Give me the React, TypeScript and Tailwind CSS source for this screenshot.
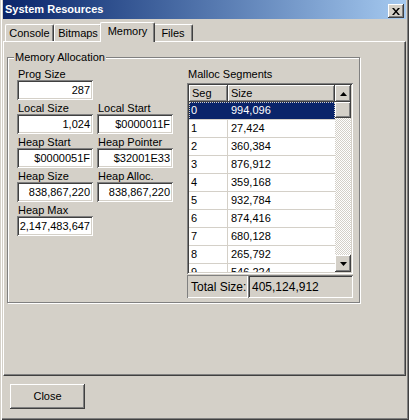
import React from 'react';

const raised =
  'shadow-[inset_-1px_-1px_0_#404040,inset_1px_1px_0_#ffffff,inset_-2px_-2px_0_#808080,inset_2px_2px_0_#d4d0c8]';
const sunken =
  'shadow-[inset_1px_1px_0_#808080,inset_-1px_-1px_0_#ffffff,inset_2px_2px_0_#404040,inset_-2px_-2px_0_#d4d0c8]';

const segments = [
  '994,096',
  '27,424',
  '360,384',
  '876,912',
  '359,168',
  '932,784',
  '874,416',
  '680,128',
  '265,792',
  '546,224',
];

function Field({ label, value }: { label: string; value: string }) {
  return (
    <div className="flex flex-col">
      <div className="h-[12px] leading-[12px] pl-[1px]">{label}</div>
      <div className={`h-[20px] w-[76px] bg-white ${sunken} flex items-center justify-end pr-[3px] whitespace-nowrap overflow-hidden`}>
        {value}
      </div>
    </div>
  );
}

function Tab({ label, active, width }: { label: string; active?: boolean; width: string }) {
  if (active) {
    return (
      <div
        className={`${width} h-[20px] -mx-[2px] -mb-[1px] relative z-10 bg-[#d4d0c8] border-t border-l border-white border-r border-r-[#404040] rounded-t-[2px] shadow-[inset_-1px_0_0_#808080] flex items-center justify-center pb-[2px]`}
      >
        {label}
      </div>
    );
  }
  return (
    <div
      className={`${width} h-[17px] bg-[#d4d0c8] border-t border-l border-white border-r border-r-[#404040] rounded-t-[2px] shadow-[inset_-1px_0_0_#808080] flex items-center justify-center`}
    >
      {label}
    </div>
  );
}

function Arrow({ up }: { up?: boolean }) {
  return (
    <svg width="7" height="4" viewBox="0 0 7 4">
      {up ? <polygon points="3.5,0 7,4 0,4" fill="#000" /> : <polygon points="0,0 7,0 3.5,4" fill="#000" />}
    </svg>
  );
}

export default function App() {
  return (
    <div
      className="w-[409px] h-[420px] bg-[#d4d0c8] flex flex-col px-[3px] pb-[3px] text-[11px] text-black shadow-[inset_1px_0_0_#d4d0c8,inset_2px_0_0_#ffffff,inset_-1px_-1px_0_#404040,inset_-2px_-2px_0_#808080] overflow-hidden"
      style={{ fontFamily: '"Liberation Sans", Arial, sans-serif' }}
    >
      {/* title bar */}
      <div className="h-[19px] flex items-start justify-between bg-gradient-to-r from-[#0a246a] to-[#a6caf0]">
        <div className="text-white font-bold text-[11px] leading-[18px] pl-[2px]">System Resources</div>
        <button className={`mt-[4px] mr-[2px] w-[16px] h-[14px] bg-[#d4d0c8] ${raised} flex items-center justify-center`}>
          <svg width="8" height="7" viewBox="0 0 8 7">
            <path d="M0 0h2l2 2.5L6 0h2L5 3.5 8 7H6L4 4.5 2 7H0l3-3.5z" fill="#000" />
          </svg>
        </button>
      </div>

      {/* tabs */}
      <div className="mt-[3px] h-[19px] flex items-end pl-[2px]">
        <Tab label="Console" width="w-[49px]" />
        <Tab label="Bitmaps" width="w-[48px]" />
        <Tab label="Memory" width="w-[55px]" active />
        <Tab label="Files" width="w-[40px]" />
      </div>

      {/* tab panel */}
      <div className="h-[335px] border-t border-l border-white border-r border-b border-r-[#404040] border-b-[#404040] shadow-[inset_-1px_-1px_0_#808080] pt-[15px] pl-[3px]">
        <div className="relative w-[353px] h-[246px] border border-[#808080] shadow-[1px_1px_0_#ffffff,inset_1px_1px_0_#ffffff] flex pt-[10px] pl-[9px]">
          <div className="absolute -top-[7px] left-[6px] bg-[#d4d0c8] px-[1px] leading-[12px]">Memory Allocation</div>

          {/* left fields */}
          <div className="flex flex-col gap-[2px]">
            <div className="flex gap-[4px]">
              <Field label="Prog Size" value="287" />
            </div>
            <div className="flex gap-[4px]">
              <Field label="Local Size" value="1,024" />
              <Field label="Local Start" value="$0000011F" />
            </div>
            <div className="flex gap-[4px]">
              <Field label="Heap Start" value="$0000051F" />
              <Field label="Heap Pointer" value="$32001E33" />
            </div>
            <div className="flex gap-[4px]">
              <Field label="Heap Size" value="838,867,220" />
              <Field label="Heap Alloc." value="838,867,220" />
            </div>
            <div className="flex gap-[4px]">
              <Field label="Heap Max" value="2,147,483,647" />
            </div>
          </div>

          {/* malloc segments */}
          <div className="ml-[14px] flex flex-col">
            <div className="h-[15px] leading-[12px] pl-[1px]">Malloc Segments</div>
            <div className={`w-[166px] h-[191px] bg-white ${sunken} p-[2px] flex`}>
              <div className="w-[146px] flex flex-col overflow-hidden">
                <div className="flex h-[17px] shrink-0">
                  <div className={`w-[39px] bg-[#d4d0c8] ${raised} pl-[3px] leading-[17px]`}>Seg</div>
                  <div className={`w-[107px] bg-[#d4d0c8] ${raised} pl-[3px] leading-[17px]`}>Size</div>
                </div>
                {segments.map((s, i) => (
                  <div
                    key={i}
                    className={`flex h-[18px] shrink-0 border-b border-[#d4d0c8] ${
                      i === 0 ? 'bg-[#0a246a] text-white outline-1 outline-dotted outline-[#d4d0c8] -outline-offset-1' : ''
                    }`}
                  >
                    <div className={`w-[39px] pl-[2px] leading-[17px] border-r ${i === 0 ? 'border-[#0a246a]' : 'border-[#d4d0c8]'}`}>{i}</div>
                    <div className="w-[107px] pl-[3px] leading-[17px]">{s}</div>
                  </div>
                ))}
              </div>
              <div className="w-[16px] flex flex-col bg-[repeating-conic-gradient(#ffffff_0%_25%,#d4d0c8_0%_50%)] bg-[length:2px_2px]">
                <div className={`h-[17px] bg-[#d4d0c8] ${raised} flex items-center justify-center`}>
                  <Arrow up />
                </div>
                <div className={`h-[16px] bg-[#d4d0c8] ${raised}`} />
                <div className="flex-1" />
                <div className={`h-[17px] bg-[#d4d0c8] ${raised} flex items-center justify-center`}>
                  <Arrow />
                </div>
              </div>
            </div>
            <div className="mt-[1px] flex h-[23px] w-[166px]">
              <div className="w-[61px] shadow-[inset_1px_1px_0_#808080,inset_-1px_-1px_0_#ffffff] flex items-center pl-[4px] text-[12px]">
                Total Size:
              </div>
              <div className={`flex-1 ${sunken} flex items-center pl-[4px] text-[12px]`}>405,124,912</div>
            </div>
          </div>
        </div>
      </div>

      {/* bottom */}
      <div className="flex-1 pt-[8px] pl-[7px]">
        <button className={`w-[75px] h-[25px] bg-[#d4d0c8] ${raised} flex items-center justify-center`}>Close</button>
      </div>
    </div>
  );
}
